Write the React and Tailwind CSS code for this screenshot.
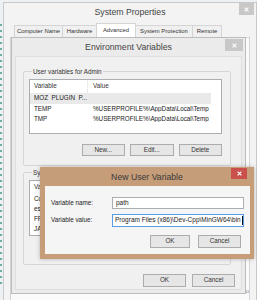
import React from 'react';

const Close = ({ className = '' }) => (
  <div className={`flex items-center justify-center ${className}`}>
    <svg width="5" height="5" viewBox="0 0 5 5">
      <path d="M0.6 0.6L4.4 4.4M4.4 0.6L0.6 4.4" stroke="#fff" strokeWidth="1.1" />
    </svg>
  </div>
);

const Btn = ({ children, className = '' }) => (
  <div className={`flex items-center justify-center border border-[#acacac] bg-[#e6e6e6] text-[6.3px] leading-none text-[#333] ${className}`}>
    {children}
  </div>
);

function VarList({ rows, rowH, className = '' }) {
  return (
    <div className={`flex flex-col overflow-hidden border border-[#abadb3] bg-white text-[6.3px] leading-none text-[#222] ${className}`}>
      <div className="flex h-[13px] shrink-0 items-center">
        <div className="flex h-full w-[58px] items-center border-r border-[#ececec] pl-[4px] text-[#333]">Variable</div>
        <div className="pl-[5px] text-[#333]">Value</div>
      </div>
      {rows.map(([name, value, sel]) => (
        <div
          key={name}
          className={`flex shrink-0 items-center whitespace-nowrap ${rowH} ${sel ? 'mr-[10px] bg-[#e9e9e9]' : ''}`}
        >
          <div className="w-[58px] shrink-0 overflow-hidden text-ellipsis pl-[4px]">{name}</div>
          <div className="min-w-0 overflow-hidden text-ellipsis pl-[5px]">{value}</div>
        </div>
      ))}
    </div>
  );
}

const Tab = ({ children, w, active }) => (
  <div
    className={`-ml-px flex items-center justify-center border border-b-0 border-[#d5d5d5] text-[5.9px] leading-none text-[#333] ${w} ${
      active ? 'z-10 h-[14px] bg-white' : 'h-[12px] bg-[#f0f0f0]'
    }`}
  >
    {children}
  </div>
);

export default function App() {
  return (
    <div className="relative flex h-[300px] w-[257px] overflow-hidden bg-[#eef1f3] font-['Liberation_Sans',Arial,sans-serif]">
      {/* desktop behind the windows */}
      <div className="flex w-[3px] shrink-0 flex-col gap-[4px] pt-[24px]">
        {Array.from({ length: 44 }).map((_, i) => (
          <div key={i} className="h-[2px] w-[2px] bg-[#6fae9f]" />
        ))}
      </div>

      {/* System Properties */}
      <div className="mt-[2px] flex h-[300px] w-[254px] shrink-0 flex-col border border-[#c9c9c9] bg-[#f3f3f3]">
        <div className="grid h-[20px] shrink-0 grid-cols-[1fr_auto_1fr] items-start">
          <div />
          <div className="pt-[4px] text-[8.7px] leading-[10px] text-[#444]">System Properties</div>
          <div className="flex justify-end pr-[2px]">
            <Close className="h-[12px] w-[15px] bg-[#c8c8c8]" />
          </div>
        </div>
        <div className="flex h-[14px] shrink-0 items-end pl-[11px]">
          <Tab w="w-[49px]">Computer Name</Tab>
          <Tab w="w-[35px]">Hardware</Tab>
          <Tab w="w-[40px]" active>Advanced</Tab>
          <Tab w="w-[58px]">System Protection</Tab>
          <Tab w="w-[30px]">Remote</Tab>
        </div>
        <div className="mx-[6px] flex flex-1 flex-col justify-end border border-[#d5d5d5] bg-[#fafafa] pb-[6px]">
          <div className="flex items-center justify-between text-[6px] leading-none">
            <span className="text-[#777]">Env</span>
            <span className="ml-[140px] text-[#c4c4c4]">Environment Variables...</span>
            <span className="text-[#888]">tio</span>
          </div>
        </div>
      </div>

      {/* Environment Variables */}
      <div className="absolute left-[11px] top-[37px] flex h-[257px] w-[235px] flex-col border border-[#bcbcbc] bg-[#ebebeb]">
        <div className="grid h-[18px] shrink-0 grid-cols-[1fr_auto_1fr] items-start">
          <div />
          <div className="pt-[4px] text-[8.7px] leading-[10px] text-[#444]">Environment Variables</div>
          <div className="flex justify-end pr-[2px] pt-[1px]">
            <Close className="h-[12px] w-[18px] bg-[#c8c8c8]" />
          </div>
        </div>
        <div className="mx-[3px] mb-[3px] flex flex-1 flex-col border border-[#dedede] bg-[#f0f0f0] px-[7px] pt-[11px]">
          <fieldset className="mr-[3px] rounded-[2px] border border-[#d5d5d5] pb-[9px] pl-[5px] pr-[8px] pt-[4px]">
            <legend className="ml-[3px] px-[1px] text-[6.3px] leading-[7px] text-[#333]">User variables for Admin</legend>
            <VarList
              className="h-[55px]"
              rowH="h-[10.5px]"
              rows={[
                ['MOZ_PLUGIN_P...', '', true],
                ['TEMP', '%USERPROFILE%\\AppData\\Local\\Temp'],
                ['TMP', '%USERPROFILE%\\AppData\\Local\\Temp'],
              ]}
            />
            <div className="mt-[10px] flex justify-end gap-[5px]">
              <Btn className="h-[12px] w-[43.5px]">New...</Btn>
              <Btn className="h-[12px] w-[43.5px]">Edit...</Btn>
              <Btn className="h-[12px] w-[43.5px]">Delete</Btn>
            </div>
          </fieldset>
          <fieldset className="mr-[3px] mt-[3px] rounded-[2px] border border-[#d5d5d5] pb-[6px] pl-[5px] pr-[8px] pt-[4px]">
            <legend className="ml-[3px] px-[1px] text-[6.3px] leading-[7px] text-[#333]">System variables</legend>
            <VarList
              className="h-[56px]"
              rowH="h-[10px]"
              rows={[
                ['ComSpec', '%SystemRoot%\\system32\\cmd.exe'],
                ['esdk', 'C:\\esdk'],
                ['FP_NO_HOST_CHECK', 'NO'],
                ['JAVA_HOME', 'C:\\Program Files\\Java\\jdk'],
              ]}
            />
            <div className="mt-[10px] flex justify-end gap-[5px]">
              <Btn className="h-[12px] w-[43.5px]">New...</Btn>
              <Btn className="h-[12px] w-[43.5px]">Edit...</Btn>
              <Btn className="h-[12px] w-[43.5px]">Delete</Btn>
            </div>
          </fieldset>
          <div className="mr-[-1px] mt-[9px] flex justify-end gap-[6px]">
            <Btn className="h-[13px] w-[43px]">OK</Btn>
            <Btn className="h-[13px] w-[43px]">Cancel</Btn>
          </div>
        </div>
      </div>

      {/* New User Variable */}
      <div className="absolute left-[40px] top-[167px] flex h-[92px] w-[214px] flex-col bg-[#c59d79] shadow-[0_0_4px_rgba(0,0,0,0.25)]">
        <div className="grid h-[19px] shrink-0 grid-cols-[1fr_auto_1fr] items-start">
          <div />
          <div className="pt-[5px] text-[8.7px] leading-[10px] text-[#3a3a3a]">New User Variable</div>
          <div className="flex justify-end pr-[7px] pt-[1px]">
            <Close className="h-[11px] w-[16px] bg-[#c9504b]" />
          </div>
        </div>
        <div className="mb-[5px] ml-[5px] mr-[4px] flex flex-1 flex-col bg-[#f5f5f5] pl-[6px] pr-[6px] pt-[11px] text-[6.3px] leading-none text-[#222]">
          <div className="flex items-center">
            <div className="w-[61px] shrink-0">Variable name:</div>
            <div className="flex h-[12px] flex-1 items-center border border-[#abadb3] bg-white pl-[3px] text-[6.5px]">path</div>
          </div>
          <div className="mt-[5px] flex items-center">
            <div className="w-[61px] shrink-0">Variable value:</div>
            <div className="flex h-[13px] flex-1 items-center overflow-hidden whitespace-nowrap border border-[#569de5] bg-white pl-[2px] text-[6.5px]">
              Program Files (x86)\Dev-Cpp\MinGW64\bin
              <span className="ml-[1px] h-[9px] w-px shrink-0 bg-[#111]" />
            </div>
          </div>
          <div className="mt-[8px] flex justify-end gap-[8px] pr-[3px]">
            <Btn className="h-[13px] w-[40px]">OK</Btn>
            <Btn className="h-[13px] w-[43px]">Cancel</Btn>
          </div>
        </div>
      </div>
    </div>
  );
}
